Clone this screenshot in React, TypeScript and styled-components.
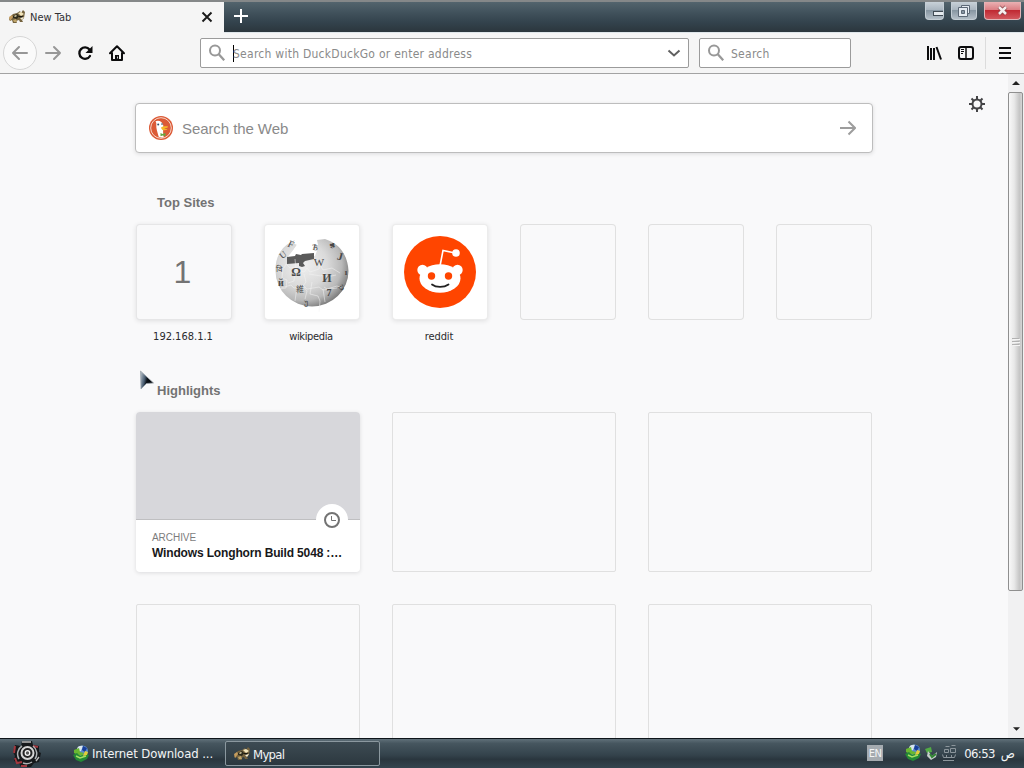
import styled, { createGlobalStyle } from 'styled-components'

const ui = `"DejaVu Sans Condensed", "DejaVu Sans", sans-serif`
const arial = `"Liberation Sans", Arial, sans-serif`

const GlobalStyle = createGlobalStyle`
  * { box-sizing: border-box; }
  body { margin: 0; overflow: hidden; }
  svg { display: block; flex-shrink: 0; }
`

const Desktop = styled.div`
  position: relative;
  width: 1024px;
  height: 768px;
  display: flex;
  flex-direction: column;
  overflow: hidden;
  background: #f9f9fa;
  font-family: ${ui};
`

const TitleBar = styled.div`
  height: 33px;
  flex-shrink: 0;
  display: flex;
  align-items: flex-start;
  border-top: 2px solid #858889;
  border-bottom: 1px solid #dfe6ea;
  background: linear-gradient(#53646d, #41525c 35%, #34444e 65%, #2b363d);
`

const Tab = styled.div`
  width: 224px;
  height: 32px;
  display: flex;
  align-items: center;
  padding: 0 11px 2px 9px;
  background: #f5f5f5;
  font-size: 11px;
  color: #303033;
`

const TabTitle = styled.span`
  flex: 1;
  margin-left: 4px;
`

const NewTab = styled.div`
  flex: 1;
  padding: 7px 0 0 10px;
`

const WindowButtons = styled.div`
  display: flex;
  gap: 7px;
  margin-right: 3px;
`

const WindowButton = styled.div<{ $width: number; $close?: boolean }>`
  width: ${props => props.$width}px;
  height: 18px;
  display: flex;
  align-items: center;
  justify-content: center;
  overflow: hidden;
  border: 1px solid ${props => props.$close ? '#e2b5b8' : '#c3cdd4'};
  border-top: none;
  border-radius: 0 0 4px 4px;
  background: ${props => props.$close
    ? 'linear-gradient(#eab1b3, #dc7f84 45%, #c02a33 50%, #d2575d)'
    : 'linear-gradient(#c8d1d8, #aab6c0 45%, #8796a2 50%, #b3bec7)'};
`

const NavBar = styled.div`
  height: 41px;
  flex-shrink: 0;
  display: flex;
  align-items: center;
  padding-left: 3px;
  background: #f5f5f5;
  border-bottom: 1px solid #a3a3a3;
`

const BackButton = styled.div`
  width: 34px;
  height: 34px;
  display: flex;
  align-items: center;
  justify-content: center;
  border: 1px solid #d6d6d6;
  border-radius: 50%;
  background: #fafafa;
`

const NavIcons = styled.div`
  width: 163px;
  display: flex;
  gap: 14px;
  padding-left: 7px;
`

const Field = styled.div<{ $width: number }>`
  width: ${props => props.$width}px;
  height: 30px;
  display: flex;
  align-items: center;
  margin-right: 10px;
  padding: 0 7px;
  border: 1px solid #9b9b9b;
  border-radius: 2px;
  background: #fff;
  color: #8a8a8a;
  font-size: 12px;
`

const Placeholder = styled.span<{ $caret?: boolean }>`
  flex: 1;
  height: 17px;
  line-height: 18px;
  margin-left: ${props => props.$caret ? 7 : 5}px;
  border-left: 1px solid ${props => props.$caret ? '#000' : 'transparent'};
  letter-spacing: 0.26px;
  text-indent: ${props => props.$caret ? -1 : 0}px;
  white-space: nowrap;
`

const ToolIcons = styled.div`
  height: 40px;
  flex: 1;
  display: flex;
  align-items: center;
  justify-content: flex-end;
  gap: 16px;
  padding-right: 12px;
`

const Separator = styled.div`
  width: 1px;
  height: 32px;
  margin: 0 -4px 0 -5px;
  background: #dcdcdc;
`

const Page = styled.div`
  height: 664px;
  display: flex;
  overflow: hidden;
  background: #f9f9fa;
`

const Main = styled.main`
  width: 736px;
  margin-left: 136px;
  padding-top: 29px;
  flex-shrink: 0;
  font-family: ${arial};
`

const WebSearch = styled.div`
  height: 50px;
  display: flex;
  align-items: center;
  margin: 0 -1px;
  padding: 0 16px 0 13px;
  border: 1px solid #bdbdbd;
  border-radius: 4px;
  background: #fff;
  box-shadow: 0 1px 4px rgba(12, 12, 13, 0.12);
  color: #8a8a8a;
  font-size: 15px;
`

const WebSearchText = styled.span`
  flex: 1;
  margin-left: 9px;
  padding-top: 1px;
  letter-spacing: -0.08px;
`

const SectionTitle = styled.h3<{ $top: number }>`
  margin: ${props => props.$top}px 0 0 21px;
  height: 16px;
  line-height: 16px;
  font-size: 13px;
  font-weight: bold;
  color: #737373;
`

const Sites = styled.div`
  height: 124px;
  display: flex;
  gap: 32px;
  margin-top: 13px;
`

const Site = styled.div`
  width: 96px;
  text-align: center;
`

const Tile = styled.div<{ $empty?: boolean; $fill?: string }>`
  height: 96px;
  display: flex;
  align-items: center;
  justify-content: center;
  border-radius: 4px;
  background: ${props => props.$fill ?? '#f9f9fa'};
  box-shadow: ${props => props.$empty
    ? 'inset 0 0 0 1px #e0e0e0'
    : 'inset 0 0 0 1px rgba(12, 12, 13, 0.08), 0 1px 5px rgba(12, 12, 13, 0.11)'};
  color: #737373;
  font-size: 32px;
`

const Initial = styled.span`
  margin-right: 3px;
`

const SiteName = styled.div<{ $spacing: number }>`
  margin: 10px 2px 0 0;
  line-height: 14px;
  font-family: ${ui};
  font-size: 11px;
  letter-spacing: ${props => props.$spacing}px;
  color: #2a2a2d;
`

const Cards = styled.div`
  display: grid;
  grid-template-columns: repeat(3, 224px);
  grid-auto-rows: 160px;
  gap: 32px;
  margin-top: 13px;
`

const EmptyCard = styled.div`
  border: 1px solid #e0e0e0;
  border-radius: 2px;
`

const Card = styled.div`
  position: relative;
  border-radius: 4px;
  background: #fff;
  box-shadow: 0 1px 4px rgba(12, 12, 13, 0.12);
`

const Preview = styled.div`
  height: 108px;
  border-bottom: 1px solid #bfbfc1;
  border-radius: 4px 4px 0 0;
  background: #d7d7db;
`

const ContextBadge = styled.div`
  position: absolute;
  right: 12px;
  top: 92px;
  width: 32px;
  height: 32px;
  display: flex;
  align-items: center;
  justify-content: center;
  border-radius: 50%;
  background: #fff;
`

const CardHost = styled.div`
  margin: 11px 0 0 16px;
  line-height: 13px;
  font-size: 10px;
  letter-spacing: -0.05px;
  color: #7c7c7c;
`

const CardTitle = styled.div`
  margin: 1px 0 0 16px;
  line-height: 16px;
  font-size: 12px;
  font-weight: bold;
  letter-spacing: -0.15px;
  white-space: nowrap;
  color: #18181a;
`

const Settings = styled.div`
  flex: 1;
  display: flex;
  justify-content: flex-end;
  padding: 22px 23px 0 0;
`

const ScrollBar = styled.div`
  width: 16px;
  display: flex;
  flex-direction: column;
  align-items: flex-start;
  background: #f1f1f2;
`

const ScrollArrow = styled.div`
  width: 16px;
  height: 18px;
  display: flex;
  align-items: center;
  justify-content: center;

  &:last-child {
    margin-top: auto;
  }
`

const Thumb = styled.div`
  width: 15px;
  height: 499px;
  display: flex;
  align-items: center;
  justify-content: center;
  border: 1px solid #8f8f8f;
  border-radius: 2px;
  background: linear-gradient(90deg, #f8f8f8, #e8e8e8 40%, #c5c5c5 80%, #d5d5d5);
`

const TaskBar = styled.div`
  height: 30px;
  display: flex;
  align-items: center;
  border-top: 1px solid #0e151a;
  background: linear-gradient(#61717a, #46565f 15%, #34434c 55%, #2a363e 70%, #34454f);
  color: #f2f4f5;
  font-size: 13px;
`

const Start = styled.div`
  width: 69px;
  padding-left: 12px;
`

const Task = styled.div<{ $active?: boolean }>`
  width: ${props => props.$active ? 155 : 156}px;
  height: 25px;
  display: flex;
  align-items: center;
  gap: 2px;
  padding-left: ${props => props.$active ? 8 : 3}px;
  border: 1px solid ${props => props.$active ? '#8b989f' : 'transparent'};
  border-radius: 2px;
  background: ${props => props.$active ? 'linear-gradient(#3d4b53, #2c383f)' : 'none'};
  white-space: nowrap;
`

const TaskLabel = styled.span<{ $spacing: number }>`
  padding-top: ${props => props.$spacing < -0.5 ? 2 : 0}px;
  letter-spacing: ${props => props.$spacing}px;
`

const Tray = styled.div`
  flex: 1;
  display: flex;
  align-items: center;
  justify-content: flex-end;
  padding-right: 9px;
`

const Language = styled.span`
  width: 16px;
  height: 16px;
  line-height: 17px;
  margin: -2px 22px 0 0;
  background: #a5abb0;
  font-size: 11px;
  letter-spacing: -0.4px;
  text-align: center;
`

const TrayIcons = styled.div`
  display: flex;
  align-items: center;
  gap: 2px;
  margin-top: -2px;
`

const Clock = styled.span`
  display: flex;
  gap: 6px;
  margin-left: 6px;
  letter-spacing: -0.6px;
`

const Cursor = styled.div`
  position: absolute;
  left: 138px;
  top: 368px;
`

function RaccoonIcon() {
  return (
    <svg width="17" height="16" viewBox="0 0 17 16">
      <path d="M2 7 4 5 8 4 11 2 12 4 14 1 16 3 15 9 13 11 14 13H11L10 11 7 12 8 14H4L3 11 1 12 0 10Z" fill="#75633f" />
      <path d="m0 8 3-2 1 2-3 4Z" fill="#c59c5e" />
      <path d="m4 7 4-2 2 2-2 3-4-1Z" fill="#2d2a1b" />
      <path d="m5 7 2-1 1 1-2 1Z" fill="#e6d9b0" />
      <path d="m9 4 3-1 3 2-3 2Z" fill="#f3e6bc" />
      <path d="m9 7 5 0-1 2-3-1Z" fill="#19170f" />
      <path d="m11 9 4-1-2 3Z" fill="#f6eed6" />
      <path d="m4 11 3-1 1 3H5Z" fill="#bfa468" />
    </svg>
  )
}

function BackArrow({ flip }: { flip?: boolean }) {
  return (
    <svg width="18" height="18" viewBox="0 0 18 18" fill="none" stroke="#979797" strokeWidth="2" strokeLinecap="round" strokeLinejoin="round">
      <path d={flip ? 'M2 9h14M10 3l6 6-6 6' : 'M16 9H2M8 3 2 9l6 6'} />
    </svg>
  )
}

function ReloadIcon() {
  return (
    <svg width="18" height="18" viewBox="0 0 18 18" fill="none" stroke="#0c0c0d" strokeWidth="2.3">
      <path d="M13.500 5.500A5.700 5.700 0 1 0 14 12" strokeLinecap="round" />
      <path d="M16.500 2v7h-7Z" fill="#0c0c0d" stroke="none" />
    </svg>
  )
}

function HomeIcon() {
  return (
    <svg width="18" height="18" viewBox="0 0 18 18">
      <path d="M2 9.300 9 2.300l7 7M4 9v7h10V9" fill="none" stroke="#0c0c0d" strokeWidth="2" strokeLinecap="round" strokeLinejoin="round" />
      <path d="M7 16v-5h4v5Z" fill="#0c0c0d" />
      <path d="M9.500 12.500v2" stroke="#ccc" strokeWidth="1" />
    </svg>
  )
}

function SearchIcon() {
  return (
    <svg width="18" height="18" viewBox="0 0 18 18" fill="none" stroke="#989898" strokeWidth="2">
      <circle cx="7" cy="6.500" r="5" />
      <path d="m10.800 10.300 5.400 5.900" strokeWidth="2.300" />
    </svg>
  )
}

function LibraryIcon() {
  return (
    <svg width="16" height="16" viewBox="0 0 16 16" stroke="#0c0c0d" strokeWidth="2">
      <path d="M2 1v14M5 3v12M8 3v12" />
      <path d="m10.500 2 4.500 12.500" />
    </svg>
  )
}

function SidebarIcon() {
  return (
    <svg width="16" height="16" viewBox="0 0 16 16" fill="none" stroke="#0c0c0d">
      <rect x="1" y="2" width="14" height="12" rx="2" strokeWidth="2" />
      <path d="M8 2v12" strokeWidth="1.500" />
      <path d="M3 4.500h3M3 6.500h3M3 8.500h2" />
    </svg>
  )
}

function DuckIcon() {
  return (
    <svg width="24" height="24" viewBox="0 0 24 24">
      <circle cx="12" cy="12" r="12" fill="#dc5a36" />
      <circle cx="12" cy="12" r="10.300" fill="#dc5a36" stroke="#f6d5c9" strokeWidth="1" />
      <path d="M6.500 5.200c3-1.500 7 0 7.800 4.300.2 3-.7 4.600.4 11.700-2 .6-3.800.3-5-.5C8.500 16 7 12.500 7.300 9c.1-1.200.2-2-.8-3.800Z" fill="#fff" />
      <circle cx="9.200" cy="8.600" r="1" fill="#36536a" />
      <circle cx="13" cy="8.100" r=".8" fill="#36536a" />
      <path d="M12 11.500c2-1.500 4.500-1.400 7-.9.500 1-2 1.500-3.800 2 1.200.5 3 .3 3.200 1-2 1.200-6 1.200-6.400-2.100Z" fill="#f6b72a" />
      <path d="m11.500 17 2 1 3-1v3l-3-.6-2 .8Z" fill="#64a642" />
    </svg>
  )
}

function WikipediaLogo() {
  return (
    <svg width="80" height="80" viewBox="0 0 80 80">
      <defs>
        <radialGradient id="globe" cx="38%" cy="38%" r="66%">
          <stop offset="0" stopColor="#f0f0f0" />
          <stop offset="0.5" stopColor="#dadada" />
          <stop offset="0.8" stopColor="#b9b9b9" />
          <stop offset="1" stopColor="#7c7c7c" />
        </radialGradient>
      </defs>
      <path d="M23 8 19 10C8 16 3 27 3.500 39a36.500 35.500 0 0 0 73 0C76 25 69 14 58 9l-5-2-8 1 1 5-5 2-1 5-8-1-3-3-7 1 3-4-4-2Z" fill="url(#globe)" />
      <path d="M22 17c2-3 4-5 4-9l6 3c4 5 7 7 14 5l-3 8-19 3-9-1Z" fill="#fff" />
      <path d="m15 25 8-1 1-2 5 1 1-1 12-1v6l-9 2-2 2 2 3-3 1-3-1v-3l-12 1Z" fill="#5a5a5a" />
      <path d="M4 37l8-1 2-4 4 4 7-1m-14 2-1 9 5 2-1 8-6 1m15-30 1 11 8 2 3-4 3 4 9-3 1-7m-25 9-1 10-6 2m16-9 2 8-3 4 4 5-2 8m4-25 12 2 3-3 3 4 9-2m-24 7-2 12 8 2 2 5-1 11m5-25 3 2 10-3 5 2m-24-27 5 9 9-2 8 5M9 56l10-3 3 3 10-2 3 3 12-2 4 3 14-2M25 55l-2 14m28-12 2 13" fill="none" stroke="#f4f4f4" strokeWidth=".7" opacity=".75" />
      <g fill="#484848" fontFamily="Liberation Serif, serif" textAnchor="middle" fontWeight="bold">
        <text x="24" y="44" fontSize="12">Ω</text>
        <text x="47" y="34" fontSize="11" fontWeight="normal">W</text>
        <text x="55" y="50" fontSize="12">И</text>
        <text x="28" y="60" fontSize="8" fontWeight="normal" fontFamily="Noto Sans CJK JP, sans-serif">維</text>
        <text x="57" y="64" fontSize="10">7</text>
        <text x="68" y="28" fontSize="11" transform="rotate(15 68 25)">J</text>
        <text x="7" y="40" fontSize="8" fontWeight="normal">वि</text>
        <text x="9" y="54" fontSize="10">й</text>
        <text x="43" y="18" fontSize="9" fontWeight="normal" transform="rotate(12 42 15)">Ѣ</text>
        <text x="60" y="16" fontSize="9" transform="rotate(30 60 14)">♣</text>
        <text x="34" y="73" fontSize="8" fontWeight="normal">უ</text>
        <text x="11" y="26" fontSize="9" fontWeight="normal" transform="rotate(-38 11 23)">U</text>
        <text x="19" y="15" fontSize="10" fontWeight="normal" transform="rotate(25 18 12)">F</text>
        <text x="70" y="58" fontSize="8" transform="rotate(-40 70 56)">ש</text>
        <text x="74" y="43" fontSize="9">ı</text>
      </g>
    </svg>
  )
}

function RedditLogo() {
  return (
    <svg width="72" height="72" viewBox="0 0 72 72">
      <circle cx="36" cy="36" r="36" fill="#ff4500" />
      <path d="m36 30 3-15.500 12 2.500" fill="none" stroke="#fff" strokeWidth="1.600" />
      <g fill="#fff">
        <circle cx="52" cy="17" r="3.800" />
        <circle cx="18.500" cy="34" r="5.200" />
        <circle cx="53.500" cy="34" r="5.200" />
        <ellipse cx="36" cy="42.500" rx="20.500" ry="14.300" />
      </g>
      <circle cx="27.500" cy="40" r="3.700" fill="#ff4500" />
      <circle cx="44.500" cy="40" r="3.700" fill="#ff4500" />
      <path d="M28 48.500c4 3.200 12 3.200 16.500 0" fill="none" stroke="#222" strokeWidth="1.800" strokeLinecap="round" />
    </svg>
  )
}

function GearIcon() {
  return (
    <svg width="16" height="16" viewBox="0 0 16 16" fill="none" stroke="#444446" strokeWidth="2">
      <circle cx="8" cy="8" r="4.500" />
      <path d="M8 0v4M8 12v4M0 8h4M12 8h4M2.500 2.500l2.700 2.700M10.800 10.800l2.700 2.700M2.500 13.500l2.700-2.700M10.800 5.200l2.700-2.700" />
    </svg>
  )
}

function DownloadManagerIcon() {
  return (
    <svg width="17" height="17" viewBox="0 0 17 17">
      <circle cx="9.500" cy="6" r="5.500" fill="#5b8bcd" />
      <path d="M4 4c0-3 4-4 6-3L8 6 5 7Z" fill="#d8e5ee" />
      <path d="m10 1 4 2-2 4-3-2Z" fill="#183e99" />
      <path d="m1 5 5-2 1 4 4 1-2 3-4-1-4-2Z" fill="#69b832" />
      <path d="m0 10 4-2 3 3 6-2 3 1-2 4-6 3-5-2Z" fill="#238a35" />
      <path d="m3 11 4 2 6-2" fill="none" stroke="#a6df63" strokeWidth="1.500" />
      <path d="m12 6 3 1-1 3-4 1Z" fill="#e1ce38" />
    </svg>
  )
}

function StartOrb() {
  return (
    <svg width="30" height="28" viewBox="0 0 30 28">
      <path d="M10 1h10l1 4 6 1v6l2 1-2 9-5 1-3 4H9l-2-4-5-2 1-5-2-4 2-7 6 1Z" fill="#16191b" />
      <path d="M3 6 2 13m1 5 2 5 5-1m-1 4h6M21 6l5 1" fill="none" stroke="#a3383f" strokeWidth="2" />
      <path d="M10 6a9.500 9.500 0 0 0-3 13M21 6a9.500 9.500 0 0 1 2 13M11 23c3 1 6 1 9-1" fill="none" stroke="#aeb2b4" strokeWidth="1.500" />
      <circle cx="15.500" cy="13" r="6" fill="#222" stroke="#d5d5d5" strokeWidth="2" />
      <circle cx="15.500" cy="13" r="2.300" fill="#555" stroke="#f5f5f5" strokeWidth="1.300" />
      <path d="M10 2h9M24 21l3-4" stroke="#bcbcbc" strokeWidth="1.300" />
    </svg>
  )
}

export default function App() {
  return (
    <Desktop>
      <GlobalStyle />
      <TitleBar>
        <Tab>
          <RaccoonIcon />
          <TabTitle>New Tab</TabTitle>
          <svg width="12" height="12" viewBox="0 0 12 12" stroke="#1a1a1a" strokeWidth="1.9">
            <path d="m1.500 1.500 9 9M10.500 1.500l-9 9" />
          </svg>
        </Tab>
        <NewTab>
          <svg width="14" height="14" viewBox="0 0 14 14" stroke="#fff" strokeWidth="2">
            <path d="M7 0v14M0 7h14" />
          </svg>
        </NewTab>
        <WindowButtons>
          <WindowButton $width={19}>
            <svg width="18" height="16" viewBox="0 0 18 16"><rect x="7.500" y="8.500" width="12" height="4" fill="#e6ebef" stroke="#404a53" /></svg>
          </WindowButton>
          <WindowButton $width={26}>
            <svg width="14" height="14" viewBox="0 0 14 14" fill="#e6ecf2" stroke="#5d6976">
              <path d="M4.500 1.500h8v8h-8Z" />
              <path d="M1.500 3.500h9v9h-9Z" />
              <path d="M4.500 6.500h3v3h-3Z" fill="#8795a2" />
            </svg>
          </WindowButton>
          <WindowButton $width={37} $close>
            <svg width="14" height="12" viewBox="0 0 14 12">
              <path d="m3 2 7 7M10 2 3 9" stroke="#8a444a" strokeWidth="4" />
              <path d="m3 2 7 7M10 2 3 9" stroke="#f6eded" strokeWidth="2.500" />
            </svg>
          </WindowButton>
        </WindowButtons>
      </TitleBar>

      <NavBar>
        <BackButton><BackArrow /></BackButton>
        <NavIcons>
          <BackArrow flip />
          <ReloadIcon />
          <HomeIcon />
        </NavIcons>
        <Field $width={489}>
          <SearchIcon />
          <Placeholder $caret>Search with DuckDuckGo or enter address</Placeholder>
          <svg width="14" height="14" viewBox="0 0 14 14" fill="none" stroke="#606060" strokeWidth="2">
            <path d="m1.500 4.500 5.500 5 5.500-5" />
          </svg>
        </Field>
        <Field $width={152}>
          <SearchIcon />
          <Placeholder>Search</Placeholder>
        </Field>
        <ToolIcons>
          <LibraryIcon />
          <SidebarIcon />
          <Separator />
          <svg width="14" height="14" viewBox="0 0 14 14" stroke="#0c0c0d" strokeWidth="2">
            <path d="M1 2h12M1 7h12M1 12h12" />
          </svg>
        </ToolIcons>
      </NavBar>

      <Page>
        <Main>
          <WebSearch>
            <DuckIcon />
            <WebSearchText>Search the Web</WebSearchText>
            <svg width="16" height="16" viewBox="0 0 16 16" fill="none" stroke="#9d9d9d" strokeWidth="2">
              <path d="M0 8h15M8.500 1.500 15 8l-6.500 6.500" />
            </svg>
          </WebSearch>

          <SectionTitle $top={42}>Top Sites</SectionTitle>
          <Sites>
            <Site>
              <Tile><Initial>1</Initial></Tile>
              <SiteName $spacing={0}>192.168.1.1</SiteName>
            </Site>
            <Site>
              <Tile $fill="#fff"><WikipediaLogo /></Tile>
              <SiteName $spacing={-0.35}>wikipedia</SiteName>
            </Site>
            <Site>
              <Tile $fill="#fff"><RedditLogo /></Tile>
              <SiteName $spacing={-0.1}>reddit</SiteName>
            </Site>
            {[0, 1, 2].map(i => (
              <Site key={i}><Tile $empty /></Site>
            ))}
          </Sites>

          <SectionTitle $top={35}>Highlights</SectionTitle>
          <Cards>
            <Card>
              <Preview />
              <ContextBadge>
                <svg width="16" height="16" viewBox="0 0 16 16" fill="none" stroke="#737373">
                  <circle cx="8" cy="8" r="7" strokeWidth="2" />
                  <path d="M7.500 4v4.500H12" />
                </svg>
              </ContextBadge>
              <CardHost>ARCHIVE</CardHost>
              <CardTitle>Windows Longhorn Build 5048 :…</CardTitle>
            </Card>
            {[0, 1, 2, 3, 4].map(i => <EmptyCard key={i} />)}
          </Cards>
        </Main>
        <Settings><GearIcon /></Settings>
        <ScrollBar>
          <ScrollArrow>
            <svg width="8" height="4" viewBox="0 0 8 4"><path d="m0 4 4-4 4 4Z" fill="#222" /></svg>
          </ScrollArrow>
          <Thumb>
            <svg width="8" height="9" viewBox="0 0 8 9" stroke="#b2b2b2">
              <path d="M0 1.500h7M0 4.500h7M0 7.500h7" />
              <path d="M1 2.500h7M1 5.500h7M1 8.500h7" stroke="#f4f4f4" />
            </svg>
          </Thumb>
          <ScrollArrow>
            <svg width="7" height="4" viewBox="0 0 8 4"><path d="m0 0 4 4 4-4Z" fill="#222" /></svg>
          </ScrollArrow>
        </ScrollBar>
      </Page>

      <TaskBar>
        <Start><StartOrb /></Start>
        <Task>
          <DownloadManagerIcon />
          <TaskLabel $spacing={-0.1}>Internet Download ...</TaskLabel>
        </Task>
        <Task $active>
          <RaccoonIcon />
          <TaskLabel $spacing={-0.7}>Mypal</TaskLabel>
        </Task>
        <Tray>
          <Language>EN</Language>
          <TrayIcons>
            <DownloadManagerIcon />
            <svg width="14" height="16" viewBox="0 0 14 16">
              <path d="m1 4 6-2 1 5-5 1Z" fill="#52ac45" />
              <path d="m4 6 4 5 5-4-1 5-5 3-4-4Z" fill="#c5ceca" />
              <path d="m6 9 2 3 4-3" fill="none" stroke="#328535" strokeWidth="2" />
            </svg>
            <svg width="18" height="17" viewBox="0 0 18 17" fill="none" stroke="#8c969c">
              <path d="M5.500 2.500h4M11.500 1.500h4M4.500 5.500h4v3h-4zM10.500 4.500h5v4h-5zM2.500 10.500l1 3h11l1-3M6.500 11v3M11.500 11v3M3 16.500h11" />
            </svg>
          </TrayIcons>
          <Clock><span>06:53</span><span>ص</span></Clock>
        </Tray>
      </TaskBar>

      <Cursor>
        <svg width="18" height="24" viewBox="0 0 18 24">
          <defs>
            <linearGradient id="pointer" x2="1" y2="0.3">
              <stop offset="0" stopColor="#c0c8cf" />
              <stop offset="0.4" stopColor="#4c6075" />
              <stop offset="0.6" stopColor="#0b1118" />
              <stop offset="1" stopColor="#020408" />
            </linearGradient>
          </defs>
          <path d="m2.500 3 13 12-7 .500L3 21Z" fill="url(#pointer)" stroke="#9aa3ab" strokeWidth=".8" />
        </svg>
      </Cursor>
    </Desktop>
  )
}
